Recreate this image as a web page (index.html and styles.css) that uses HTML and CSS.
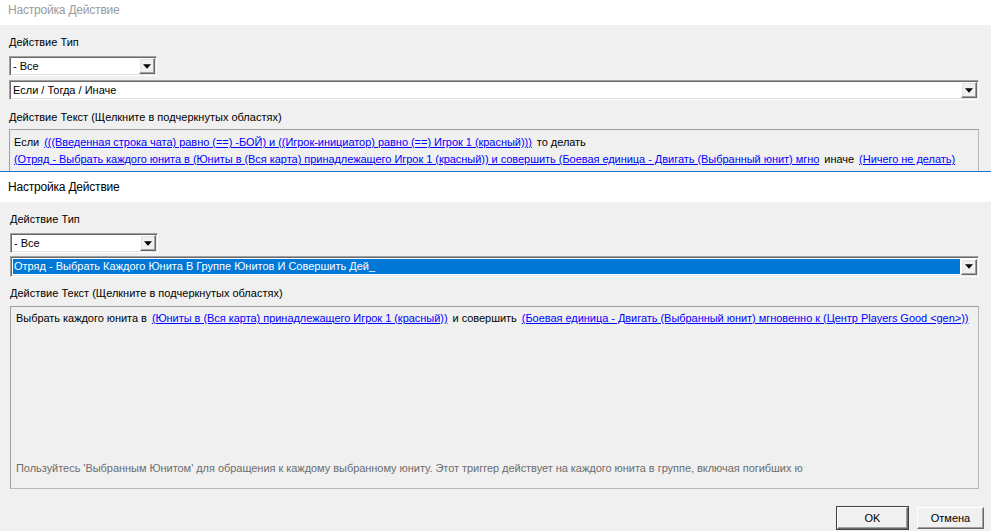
FILE: index.html
```html
<!DOCTYPE html>
<html lang="ru">
<head>
<meta charset="utf-8">
<title>Настройка Действие</title>
<link rel="stylesheet" href="styles.css">
</head>
<body>
<div class="dialog dialog-back">
  <div class="titlebar inactive">Настройка Действие</div>
  <div class="body">
    <div class="label">Действие Тип</div>
    <div class="combo combo-short">
      <span class="combo-value">- Все</span>
      <span class="drop"><svg width="7" height="4" viewBox="0 0 7 4"><path d="M0 0H7L3.5 4Z" fill="#000"/></svg></span>
    </div>
    <div class="combo combo-long">
      <span class="combo-value">Если / Тогда / Иначе</span>
      <span class="drop"><svg width="7" height="4" viewBox="0 0 7 4"><path d="M0 0H7L3.5 4Z" fill="#000"/></svg></span>
    </div>
    <div class="label label-2">Действие Текст (Щелкните в подчеркнутых областях)</div>
    <div class="textbox textbox-back">
      <div class="line"><span>Если</span> <a class="lnk">(((Введенная строка чата) равно (==) -БОЙ) и ((Игрок-инициатор) равно (==) Игрок 1 (красный)))</a> <span>то делать</span></div>
      <div class="line"><a class="lnk first">(Отряд - Выбрать каждого юнита в (Юниты в (Вся карта) принадлежащего Игрок 1 (красный)) и совершить (Боевая единица - Двигать (Выбранный юнит) мгно</a> <span>иначе</span> <a class="lnk">(Ничего не делать)</a></div>
    </div>
  </div>
</div>
<div class="dialog dialog-front">
  <div class="titlebar">Настройка Действие</div>
  <div class="body">
    <div class="label">Действие Тип</div>
    <div class="combo combo-short">
      <span class="combo-value">- Все</span>
      <span class="drop"><svg width="7" height="4" viewBox="0 0 7 4"><path d="M0 0H7L3.5 4Z" fill="#000"/></svg></span>
    </div>
    <div class="combo combo-long combo-selected">
      <span class="combo-value selected">Отряд - Выбрать Каждого Юнита В Группе Юнитов И Совершить Дей_</span>
      <span class="drop"><svg width="7" height="4" viewBox="0 0 7 4"><path d="M0 0H7L3.5 4Z" fill="#000"/></svg></span>
    </div>
    <div class="label label-2">Действие Текст (Щелкните в подчеркнутых областях)</div>
    <div class="textbox textbox-front">
      <div class="line"><span>Выбрать каждого юнита в</span> <a class="lnk">(Юниты в (Вся карта) принадлежащего Игрок 1 (красный))</a> <span>и совершить</span> <a class="lnk">(Боевая единица - Двигать (Выбранный юнит) мгновенно к (Центр Players Good &lt;gen&gt;))</a></div>
      <div class="hint">Пользуйтесь 'Выбранным Юнитом' для обращения к каждому выбранному юниту. Этот триггер действует на каждого юнита в группе, включая погибших ю</div>
    </div>
    <div class="buttons">
      <button class="btn btn-default">OK</button>
      <button class="btn">Отмена</button>
    </div>
  </div>
</div>
</body>
</html>
```

FILE: styles.css
```css
html, body {
  margin: 0;
  padding: 0;
}
body {
  width: 991px;
  height: 531px;
  overflow: hidden;
  background: #f0f0f0;
  font-family: "Liberation Sans", Arial, sans-serif;
  font-size: 11px;
  color: #000;
}
.dialog {
  background: #f0f0f0;
}
.dialog-back {
  height: 171px;
  overflow: hidden;
}
.dialog-back .titlebar {
  margin-top: -5px;
}
.dialog-front {
  border-top: 1px solid #1a73c4;
}
.titlebar {
  height: 30px;
  background: #fff;
  font-size: 12px;
  letter-spacing: -0.2px;
  line-height: 30px;
  padding-left: 8px;
  color: #000;
}
.titlebar.inactive {
  color: #9a9a9a;
}
.body {
  padding: 11px 12px 0 10px;
}
.dialog-back .body {
  padding-left: 9px;
}
.label {
  line-height: 13px;
  height: 13px;
  white-space: nowrap;
}
.combo {
  display: flex;
  align-items: center;
  box-sizing: border-box;
  height: 20px;
  margin-top: 7px;
  background: #fff;
  border-top: 1px solid #a0a0a0;
  border-left: 1px solid #a0a0a0;
  border-right: 1px solid #fff;
  border-bottom: 1px solid #fff;
  box-shadow: inset 1px 1px 0 #696969, inset -1px -1px 0 #e3e3e3;
}
.combo-short {
  width: 148px;
}
.combo-long {
  margin-top: 3px;
  height: 21px;
}
.dialog-back .combo-long {
  margin-top: 4px;
  height: 20px;
}
.combo-value {
  flex: 1;
  padding-left: 2px;
  margin-left: 1px;
  white-space: nowrap;
  overflow: hidden;
  line-height: 15px;
}
.combo-value.selected {
  background: #0078d7;
  color: #fff;
  margin: 2px 1px 2px 2px;
  align-self: stretch;
  display: flex;
  align-items: center;
  padding-left: 1px;
}
.drop {
  box-sizing: border-box;
  width: 16px;
  height: 16px;
  margin-right: 1px;
  display: flex;
  align-items: center;
  justify-content: center;
  background: #f0f0f0;
  border-top: 1px solid #fff;
  border-left: 1px solid #fff;
  border-right: 1px solid #696969;
  border-bottom: 1px solid #696969;
  box-shadow: inset -1px -1px 0 #a0a0a0, inset 1px 1px 0 #e3e3e3;
}
.drop svg {
  width: 8px;
  height: 5px;
}
.label-2 {
  margin-top: 10px;
}
.dialog-back .label-2 {
  margin-top: 11px;
}
.textbox {
  box-sizing: border-box;
  margin-top: 6px;
  border: 1px solid #a0a0a0;
  border-right-color: #b8b8b8;
  border-bottom-color: #b8b8b8;
  background: #f0f0f0;
  padding: 4px 5px 0 4px;
  white-space: nowrap;
  overflow: hidden;
  letter-spacing: -0.04px;
}
.textbox-back {
  margin-top: 5px;
  height: 80px;
  padding-top: 4px;
}
.textbox-back .line {
  line-height: 17px;
}
.textbox-front {
  height: 183px;
  display: flex;
  flex-direction: column;
  padding: 5px 5px 13px 5px;
}
.line {
  line-height: 13px;
}
.lnk {
  color: #0000ff;
  text-decoration: underline;
  margin: 0 2px;
}
.lnk.first {
  margin-left: 0;
}
.hint {
  margin-top: auto;
  line-height: 13px;
  color: #6d6d6d;
}
.buttons {
  display: flex;
  justify-content: flex-end;
  gap: 9px;
  margin-top: 18px;
  margin-right: -5px;
}
.btn {
  box-sizing: border-box;
  height: 22px;
  width: 67px;
  font-family: "Liberation Sans", Arial, sans-serif;
  font-size: 11px;
  background: #f0f0f0;
  color: #000;
  border-top: 1px solid #fff;
  border-left: 1px solid #fff;
  border-right: 1px solid #696969;
  border-bottom: 1px solid #696969;
  box-shadow: inset -1px -1px 0 #a0a0a0;
  padding: 0;
}
.btn-default {
  width: 71px;
  outline: 1px solid #404040;
  outline-offset: 0;
}
```
